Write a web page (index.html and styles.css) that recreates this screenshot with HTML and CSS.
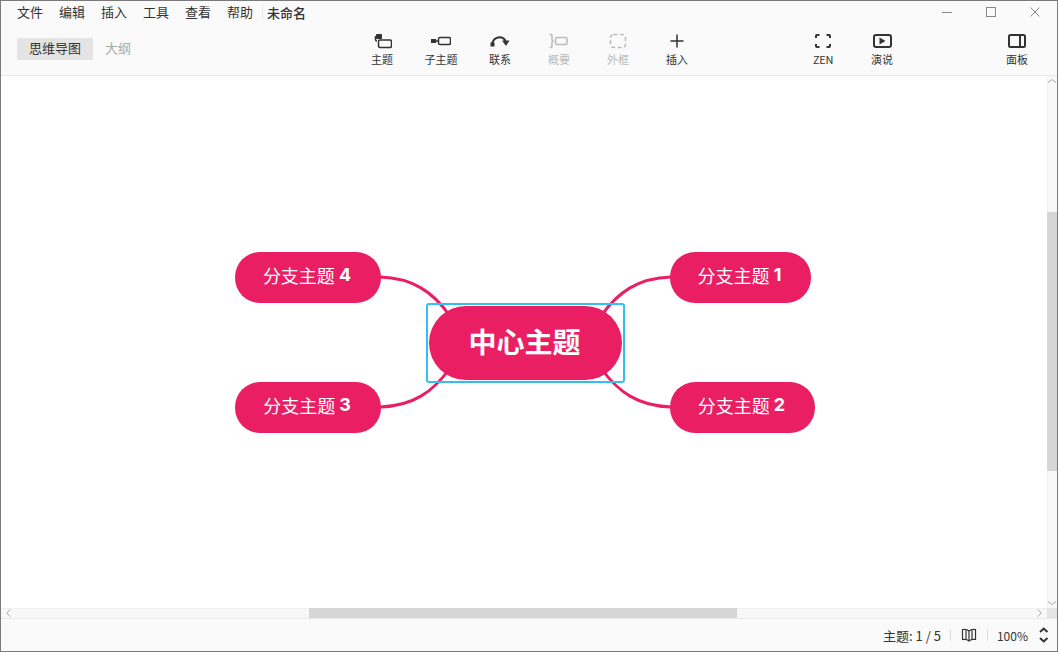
FILE: index.html
```html
<!DOCTYPE html>
<html lang="zh-CN">
<head>
  <meta charset="UTF-8">
  <title>未命名</title>
  <link rel="stylesheet" href="styles.css">
</head>
<body>

<div class="window">
  <div class="titlebar">
    <div class="menu">
      <span>文件</span>
      <span>编辑</span>
      <span>插入</span>
      <span>工具</span>
      <span>查看</span>
      <span>帮助</span>
    </div>
    <div class="doc-name">未命名</div>
    <div class="win-controls">
      <svg width="16" height="16" viewBox="0 0 16 16"><path d="M3 8.500h10" class="win-line"/></svg>
      <svg width="16" height="16" viewBox="0 0 16 16"><rect x="3.500" y="3.500" width="9" height="9" class="win-line"/></svg>
      <svg width="16" height="16" viewBox="0 0 16 16"><path d="M3.500 3.500l9 9M12.500 3.500l-9 9" class="win-line"/></svg>
    </div>
  </div>

  <div class="toolbar">
    <div class="tabs">
      <div class="tab active">思维导图</div>
      <div class="tab">大纲</div>
    </div>

    <div class="tools">
      <div class="tool">
        <svg width="20" height="16" viewBox="0 0 20 16"><rect x="4" y="1" width="6" height="5" rx="1" class="fill"/><path d="M3.500 3v3.500q0 1.500 1.500 1.500" class="ico"/><rect x="6.500" y="7" width="13" height="7.500" rx="1.500" class="ico"/></svg>
        <span>主题</span>
      </div>
      <div class="tool">
        <svg width="20" height="16" viewBox="0 0 20 16"><rect x="0" y="6" width="5" height="4" class="fill"/><path d="M5 8h3" class="ico"/><rect x="7.500" y="4.500" width="12" height="7" rx="1.500" class="ico"/></svg>
        <span>子主题</span>
      </div>
      <div class="tool">
        <svg width="20" height="16" viewBox="0 0 20 16"><path d="M2.500 11V10A7 7 0 0 1 15.500 8" class="ico ico-thick"/><rect x="0.500" y="9.500" width="4" height="4" class="fill"/><path d="M12 7.500h7.500l-3.500 5.500z" class="fill"/></svg>
        <span>联系</span>
      </div>
      <div class="tool disabled">
        <svg width="20" height="16" viewBox="0 0 20 16"><path d="M0.500 1.500h1.500q1 0 1 1V7l1 1-1 1v4.500q0 1-1 1H0.500" class="ico"/><rect x="6.500" y="4.500" width="11.500" height="7" rx="1.500" class="ico"/></svg>
        <span>概要</span>
      </div>
      <div class="tool disabled">
        <svg width="18" height="16" viewBox="0 0 18 16"><rect x="1.500" y="1.500" width="15" height="13" rx="3" class="ico dashed"/></svg>
        <span>外框</span>
      </div>
      <div class="tool">
        <svg width="16" height="16" viewBox="0 0 16 16"><path d="M8 1.500v13M1.500 8h13" class="ico"/></svg>
        <span>插入</span>
      </div>
    </div>

    <div class="tools tools-view">
      <div class="tool">
        <svg width="18" height="16" viewBox="0 0 18 16"><path d="M2 5V3q0-1 1-1h2.500M12.500 2H15q1 0 1 1v2M16 11v2q0 1-1 1h-2.500M5.500 14H3q-1 0-1-1v-2" class="ico ico-thick"/></svg>
        <span class="latin">ZEN</span>
      </div>
      <div class="tool">
        <svg width="20" height="16" viewBox="0 0 20 16"><rect x="2" y="2" width="17" height="12" rx="2" class="ico ico-thick"/><path d="M7.500 4.500l6 3.500-6 3.500z" class="fill"/></svg>
        <span>演说</span>
      </div>
    </div>

    <div class="tool tool-panel">
      <svg width="20" height="16" viewBox="0 0 20 16"><rect x="2" y="2" width="16" height="12" rx="1.500" class="ico ico-thick"/><path d="M13 2v12" class="ico ico-thick"/></svg>
      <span>面板</span>
    </div>
  </div>

  <div class="workspace">
    <div class="canvas">
      <svg class="links" width="1046" height="532" viewBox="0 0 1046 532">
        <path d="M379 201C412 202 432 216 449 240"/>
        <path d="M379 331C412 330 432 316 449 292"/>
        <path d="M670 201C637 202 617 216 600 240"/>
        <path d="M670 331C637 330 617 316 600 292"/>
      </svg>
      <div class="selection"></div>
      <div class="node node-main">中心主题</div>
      <div class="node node-4">分支主题 <b>4</b></div>
      <div class="node node-3">分支主题 <b>3</b></div>
      <div class="node node-1">分支主题 <b>1</b></div>
      <div class="node node-2">分支主题 <b>2</b></div>
    </div>
    <div class="vscroll">
      <svg class="arrow" width="10" height="10" viewBox="0 0 10 10"><path d="M1 6.500l4-3 4 3"/></svg>
      <div class="vtrack"><div class="vthumb"></div></div>
      <svg class="arrow" width="10" height="10" viewBox="0 0 10 10"><path d="M1 3.500l4 3 4-3"/></svg>
    </div>
  </div>

  <div class="hscroll">
    <svg class="arrow" width="10" height="10" viewBox="0 0 10 10"><path d="M9 1.500l-3 3.500 3 3.500"/></svg>
    <div class="htrack"><div class="hthumb"></div></div>
    <svg class="arrow" width="10" height="10" viewBox="0 0 10 10"><path d="M1 1.500l3 3.500-3 3.500"/></svg>
    <div class="corner"></div>
  </div>

  <div class="statusbar">
    <span class="topic-count">主题: 1 / 5</span>
    <i class="sep"></i>
    <svg width="16" height="14" viewBox="0 0 16 14"><path d="M8 3Q6 1 1.500 1.500v10Q6 11 8 13q2-2 6.500-1.500v-10Q10 1 8 3zM8 3v10M5 1.500v10M11 1.500v10" class="ico ico-thin"/></svg>
    <i class="sep"></i>
    <span class="zoom-value">100%</span>
    <svg class="zoom-arrows" width="10" height="16" viewBox="0 0 10 16"><path d="M1 5l3.750-3.500L8.500 5M1 11l3.750 3.500L8.500 11" class="ico ico-thick"/></svg>
  </div>
</div>

</body>
</html>
```

FILE: styles.css
```css
* {
  box-sizing: border-box;
}

html, body {
  margin: 0;
  height: 100%;
}

body {
  font-family: "Noto Sans CJK SC", "Liberation Sans", sans-serif;
  color: #333;
  background-color: #fff;
  overflow: hidden;
}

.window {
  width: 1058px;
  height: 652px;
  border: 1px solid #7a7a7a;
  display: flex;
  flex-direction: column;
}

/* title bar */
.titlebar {
  height: 24px;
  flex: none;
  display: flex;
  align-items: center;
  padding-left: 16px;
  padding-bottom: 2px;
  background-color: #fafafa;
  font-size: 13px;
}

.menu {
  display: flex;
  gap: 16px;
  padding-right: 9px;
  border-right: 1px solid #e6e6e6;
  line-height: 14px;
}

.doc-name {
  margin-left: 4px;
  font-weight: 500;
  color: #333;
}

.win-controls {
  margin-left: auto;
  display: flex;
  gap: 28px;
  padding-right: 14px;
}

.win-line {
  fill: none;
  stroke: #888;
  stroke-width: 1;
}

/* toolbar */
.toolbar {
  height: 51px;
  flex: none;
  display: flex;
  background-color: #fafafa;
  border-bottom: 1px solid #e8e8e8;
}

.tabs {
  display: flex;
  margin: 13px 0 0 16px;
  width: 335.500px;
  height: 22px;
  font-size: 13px;
  line-height: 20px;
}

.tab {
  color: #aaa;
  padding: 0 12px;
}

.tab.active {
  color: #333;
  background-color: #e4e4e4;
}

.tools {
  display: flex;
}

.tools-view {
  margin-left: 87px;
}

.tool {
  width: 59px;
  display: flex;
  flex-direction: column;
  align-items: center;
  padding-top: 8px;
  font-size: 11px;
  line-height: 14px;
  color: #333;
}

.tool svg {
  margin-bottom: 3px;
}

.tool .latin {
  letter-spacing: -0.3px;
}

.tool.disabled {
  color: #bbb;
}

.tool-panel {
  margin-left: auto;
  margin-right: 10.500px;
}

.ico {
  fill: none;
  stroke: #333;
  stroke-width: 1.500;
}

.ico-thick {
  stroke-width: 2;
}

.ico-thin {
  stroke-width: 1.200;
}

.fill {
  fill: #333;
}

.disabled .ico {
  stroke: #bbb;
}

.dashed {
  stroke-dasharray: 4 2.500;
}

/* canvas */
.workspace {
  flex: 1;
  display: flex;
  min-height: 0;
}

.canvas {
  flex: 1;
  position: relative;
  background-color: #fff;
}

.links {
  position: absolute;
  left: 0;
  top: 0;
}

.links path {
  fill: none;
  stroke: #ea1f63;
  stroke-width: 3;
}

.node {
  position: absolute;
  display: flex;
  align-items: center;
  justify-content: center;
  height: 51px;
  padding: 0 2px 6px 0;
  border-radius: 25px;
  background-color: #ea1f63;
  color: #fff;
  font-size: 18px;
  white-space: pre;
}

.node b {
  font-family: Inter, sans-serif;
  font-weight: 700;
}

.node-main {
  left: 428px;
  top: 230px;
  width: 193px;
  height: 74px;
  padding-bottom: 4px;
  border-radius: 37px;
  font-size: 28px;
  font-weight: 700;
  z-index: 2;
}

.node-4 {
  left: 234px;
  top: 176px;
  width: 146px;
}

.node-3 {
  left: 234px;
  top: 306px;
  width: 146px;
}

.node-1 {
  left: 669px;
  top: 176px;
  width: 141px;
}

.node-2 {
  left: 669px;
  top: 306px;
  width: 145px;
}

.selection {
  position: absolute;
  left: 425px;
  top: 227px;
  width: 199px;
  height: 80px;
  border: 2px solid #35bdf5;
  border-radius: 3px;
  z-index: 1;
  pointer-events: none;
}

/* scrollbars */
.vscroll {
  width: 10px;
  flex: none;
  display: flex;
  flex-direction: column;
  background-color: #f8f8f8;
  box-shadow: inset 1px 0 #f0f0f0;
}

.vtrack, .htrack {
  flex: 1;
  min-width: 0;
  min-height: 0;
  display: flex;
}

.vtrack {
  flex-direction: column;
  padding-top: 126px;
  padding-bottom: 127px;
}

.vthumb, .hthumb {
  flex: 1;
  background-color: #d6d6d6;
}

.hscroll {
  height: 11px;
  flex: none;
  display: flex;
  align-items: center;
  background-color: #f8f8f8;
  box-shadow: inset 0 1px #eee;
  border-bottom: 1px solid #e8e8e8;
}

.htrack {
  height: 100%;
  padding-left: 298px;
  padding-right: 300px;
}

.corner {
  width: 10px;
  height: 100%;
  background-color: #e4e4e4;
}

.arrow {
  flex: none;
}

.arrow path {
  fill: none;
  stroke: #aaa;
  stroke-width: 1;
}

/* status bar */
.statusbar {
  height: 32px;
  flex: none;
  display: flex;
  align-items: center;
  justify-content: flex-end;
  gap: 10px;
  padding-right: 8px;
  background-color: #fafafa;
  font-size: 12px;
}

.topic-count {
  font-size: 13px;
  margin-right: -1px;
}

.zoom-value {
  margin: 0 1px 0 -1px;
}

.sep {
  width: 1px;
  height: 12px;
  background-color: #ddd;
}

.zoom-arrows {
  flex: none;
}
```
